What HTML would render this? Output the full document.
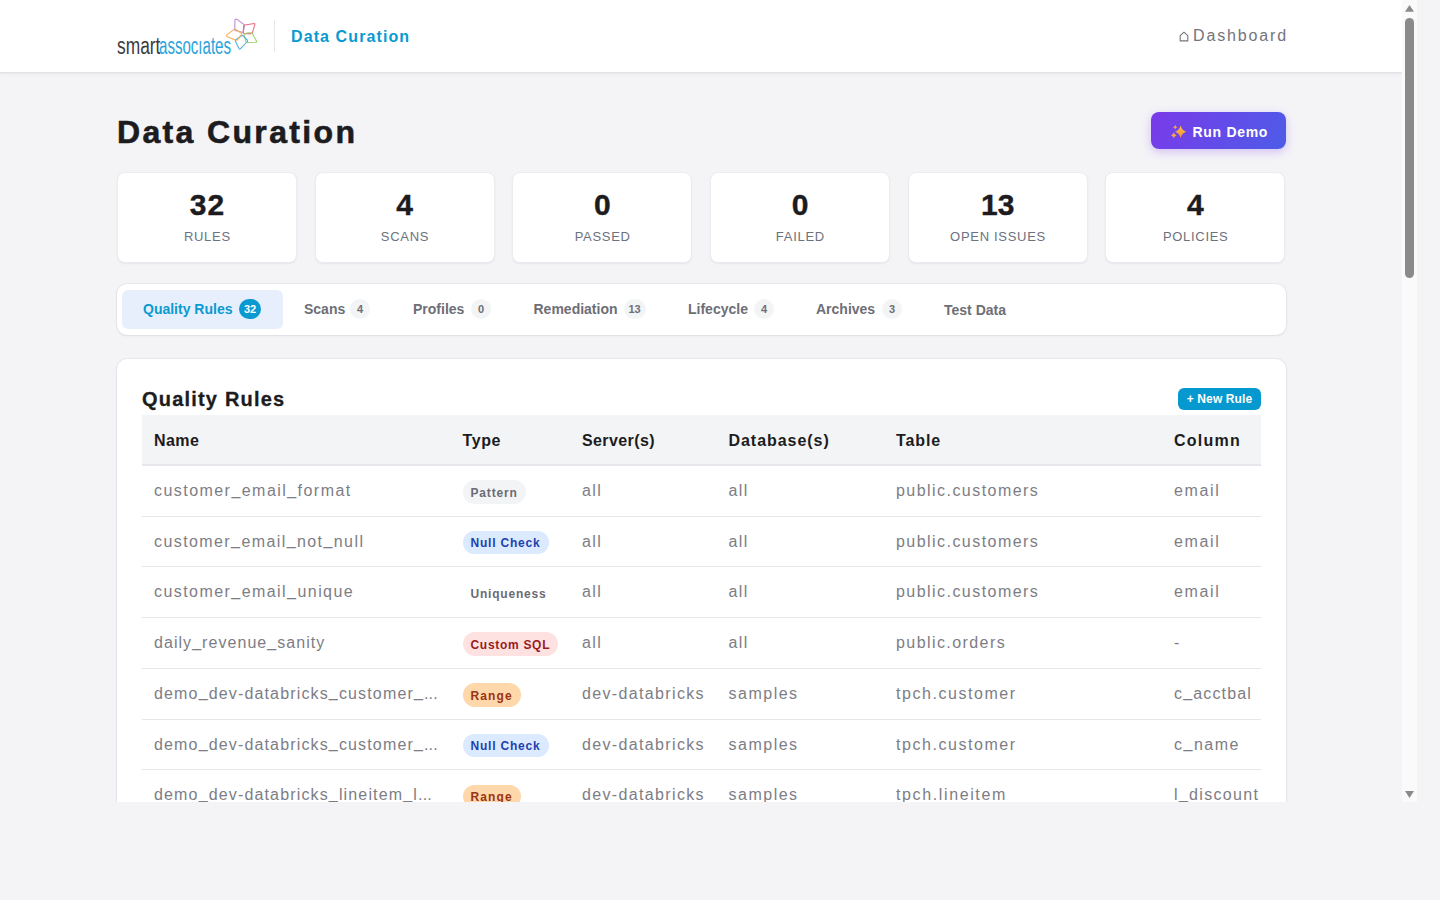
<!DOCTYPE html>
<html><head><meta charset="utf-8">
<style>
*{box-sizing:border-box}
html,body{margin:0;padding:0;width:1440px;height:900px;overflow:hidden;background:#f4f4f7;font-family:"Liberation Sans",sans-serif}
#view{position:absolute;left:0;top:0;width:1402px;height:802px;overflow:hidden;background:#f4f4f7}
#track{position:absolute;left:1402px;top:0;width:15px;height:802px;background:#fafafa}
#thumb{position:absolute;left:3px;top:18px;width:9px;height:260px;border-radius:5px;background:#8a8a8a}
.abs{position:absolute}
header{position:absolute;left:0;top:0;width:1402px;height:72px;background:#fff;box-shadow:0 1px 0 #e3e3e8,0 2px 0 #e9e9ed,0 2px 4px rgba(0,0,0,0.04)}
.logo-text{position:absolute;left:117px;top:33px;font-size:23px;line-height:26px;white-space:nowrap;transform-origin:0 0;letter-spacing:0}
.sep{position:absolute;left:274px;top:20px;width:1px;height:32px;background:#e5e7eb}
.htitle{position:absolute;left:291px;top:27.6px;font-size:16px;line-height:18px;font-weight:bold;color:#0a9ad2;letter-spacing:1.1px;white-space:nowrap}
.dash{position:absolute;left:1193px;top:26.6px;font-size:16px;line-height:18px;color:#74747c;letter-spacing:1.85px;white-space:nowrap}
.ptitle{position:absolute;left:117px;top:113.5px;font-size:32px;line-height:37px;font-weight:bold;color:#1c1c20;letter-spacing:2.35px;white-space:nowrap;-webkit-text-stroke:0.6px #1c1c20}
.run{position:absolute;left:1151px;top:112px;width:135px;height:37px;border-radius:8px;background:linear-gradient(120deg,#7a3ae9 0%,#4d5ce8 100%);box-shadow:0 3px 10px rgba(124,58,237,0.28)}
.run span{position:absolute;left:41.5px;top:12px;font-size:14px;line-height:16px;font-weight:bold;color:#fff;letter-spacing:0.7px;white-space:nowrap}
.card{position:absolute;top:172px;width:180px;height:91px;background:#fff;border-radius:8px;border:1px solid #ececf0;box-shadow:0 1px 2px rgba(20,20,40,0.06)}
.card .v{position:absolute;left:0;right:0;top:15px;text-align:center;font-size:30px;line-height:34px;font-weight:bold;color:#1c1c20;letter-spacing:1px;text-indent:1px;-webkit-text-stroke:0.4px #1c1c20}
.card .l{position:absolute;left:0;right:0;top:56px;text-align:center;font-size:13px;line-height:15px;color:#6b7280;letter-spacing:0.7px;text-indent:0.7px}
.tabs{position:absolute;left:117px;top:284px;width:1169px;height:51px;background:#fff;border-radius:10px;box-shadow:0 0 0 1px rgba(30,30,50,0.045),0 1px 3px rgba(20,20,40,0.06)}
.tab{position:absolute;top:6px;height:39px;border-radius:6px;font-size:14px;font-weight:bold;color:#6e6e76;white-space:nowrap}
.tab.active{background:#e8effc;color:#0a9ad2}
.tab .t{position:absolute;left:21px;top:11px;line-height:16px}
.tab .b{position:absolute;top:9px;height:20px;min-width:20px;padding:0 5px;border-radius:10px;background:#f3f4f6;color:#6e6e76;font-size:11px;line-height:20px;text-align:center}
.tab.active .b{background:#0a9ad2;color:#fff}
.main{position:absolute;left:117px;top:359px;width:1169px;height:600px;background:#fff;border-radius:10px;box-shadow:0 0 0 1px rgba(30,30,50,0.045),0 1px 3px rgba(20,20,40,0.06)}
.qtitle{position:absolute;left:25px;top:29px;font-size:20px;line-height:23px;font-weight:bold;color:#1c1c20;letter-spacing:1.2px;white-space:nowrap;-webkit-text-stroke:0.3px #1c1c20}
.newrule{position:absolute;left:1061px;top:29px;width:83px;height:22px;border-radius:6px;background:#0699d0;color:#fff;font-size:12px;font-weight:bold;line-height:22px;text-align:center;letter-spacing:0.1px}
.tbl{position:absolute;left:25px;top:56px;width:1119px;border-collapse:collapse;table-layout:fixed}
.tbl th{height:50.4px;padding:2px 12px 0;text-align:left;background:#f3f4f6;border-bottom:2px solid #e5e7eb;font-size:16px;font-weight:bold;color:#1c1c20;letter-spacing:0.95px;white-space:nowrap}
.tbl td{height:50.75px;padding:0 12px;border-bottom:1px solid #e5e7eb;font-size:16px;color:#7d7d85;letter-spacing:1.5px;white-space:nowrap;overflow:hidden}
.tbl i{font-style:normal;position:relative;top:-1.5px}
.tbl .nm{overflow:hidden;text-overflow:ellipsis;white-space:nowrap}
.pill{display:inline-block;vertical-align:middle;position:relative;top:1px;height:23.5px;line-height:23.5px;padding:1.5px 8px 0;border-radius:12px;font-size:12px;font-weight:bold;letter-spacing:0.8px}
.pat{background:#f3f4f6;color:#6b6b73}
.nul{background:#dbeafe;color:#1e40af}
.uni{background:#fff;color:#6b6b73}
.sql{background:#fee2e2;color:#991b1b}
.rng{background:#fed7aa;color:#9a3412}
</style></head><body>
<div id="view">
<header>
  <div class="logo-text" style="color:#3b3b3d;transform:scaleX(0.755)">smart</div><div class="logo-text" style="left:158.5px;color:#2aa3dc;transform:scaleX(0.655)">assocıates</div>
  <svg class="abs" style="left:224px;top:16px" width="36" height="38" viewBox="0 0 36 38" fill="none" stroke-width="1.05" stroke-linejoin="round" stroke-linecap="round" opacity="0.9">
    <path d="M11.6 3.3 Q12.3 2.9 13 3.4 L20.6 8.9 Q19.9 13 19.2 16.4 L11.4 14.6 Q10.8 14.3 10.8 13.6 L10.9 4.2 Q11 3.6 11.6 3.3Z" stroke="#b57ccb"/>
    <path d="M19.6 9.8 Q20 9.2 21 9.1 L30.2 7.6 Q31 7.6 30.9 8.4 L28.4 16.6 Q28 17.4 27 17.6 L20.6 17.6 Q19.4 17.5 19.2 16.4 Z" stroke="#e75f72"/>
    <path d="M21.2 17.6 Q24.5 16.2 28 17 L32.6 25.2 Q33 26.1 32 26.2 L22.8 26.4 Q22.2 26.4 22 25.8 L20 18.8 Z" stroke="#96cd62"/>
    <path d="M18.4 19.2 L23.3 24 Q23.9 24.8 23.4 25.5 L16.3 32.9 Q15.6 33.5 15.1 32.7 L11.4 25.2 Q11.1 24.4 11.8 23.8 Z" stroke="#3ba6de"/>
    <path d="M2.6 19.1 L10 13.4 Q10.6 13 11.4 13.3 L17.4 17.2 Q17.9 17.8 17.4 18.5 L13.4 23.9 Q12.9 24.5 12.1 24.2 L2.9 20.4 Q2.1 19.8 2.6 19.1Z" stroke="#f6a64a"/>
  </svg>
  <div class="sep"></div>
  <div class="htitle">Data Curation</div>
  <svg class="abs" style="left:1179px;top:31px" width="10" height="11" viewBox="0 0 10 11"><path d="M1.2 9.9 L1.2 4.6 L5 1.2 L8.8 4.6 L8.8 9.9 Z" fill="none" stroke="#74747c" stroke-width="1.1" stroke-linejoin="round"/></svg>
  <div class="dash">Dashboard</div>
</header>

<div class="ptitle">Data Curation</div>
<div class="run">
  <svg class="abs" style="left:0;top:0" width="135" height="37" viewBox="0 0 135 37"><defs><linearGradient id="sg" x1="0" y1="0" x2="0" y2="1"><stop offset="0" stop-color="#fbbf45"/><stop offset="1" stop-color="#f4913a"/></linearGradient></defs><path d="M29.6 13.600000000000001 Q30.900000000000002 18.5 35.2 19.8 Q30.900000000000002 21.1 29.6 26.0 Q28.3 21.1 24.0 19.8 Q28.3 18.5 29.6 13.600000000000001Z" fill="url(#sg)"/><path d="M24.2 13.0 Q24.7 14.7 26.4 15.2 Q24.7 15.7 24.2 17.4 Q23.7 15.7 22.0 15.2 Q23.7 14.7 24.2 13.0Z" fill="url(#sg)"/><path d="M22.8 20.599999999999998 Q23.400000000000002 22.799999999999997 25.6 23.4 Q23.400000000000002 24.0 22.8 26.2 Q22.2 24.0 20.0 23.4 Q22.2 22.799999999999997 22.8 20.599999999999998Z" fill="url(#sg)"/></svg>
  <span>Run Demo</span>
</div>

<div class="card" style="left:117px"><div class="v">32</div><div class="l">RULES</div></div>
<div class="card" style="left:314.67px"><div class="v">4</div><div class="l">SCANS</div></div>
<div class="card" style="left:512.33px"><div class="v">0</div><div class="l">PASSED</div></div>
<div class="card" style="left:710px"><div class="v">0</div><div class="l">FAILED</div></div>
<div class="card" style="left:907.67px"><div class="v" style="letter-spacing:0;text-indent:0">13</div><div class="l">OPEN ISSUES</div></div>
<div class="card" style="left:1105.33px"><div class="v">4</div><div class="l">POLICIES</div></div>

<div class="tabs">
  <div class="tab active" style="left:5px;width:161px"><span class="t">Quality Rules</span><span class="b" style="left:117px">32</span></div>
  <div class="tab" style="left:166px;width:109px"><span class="t">Scans</span><span class="b" style="left:67px">4</span></div>
  <div class="tab" style="left:275px;width:121px"><span class="t">Profiles</span><span class="b" style="left:79px">0</span></div>
  <div class="tab" style="left:395.5px;width:155px"><span class="t">Remediation</span><span class="b" style="left:111px">13</span></div>
  <div class="tab" style="left:550px;width:128px"><span class="t">Lifecycle</span><span class="b" style="left:87px">4</span></div>
  <div class="tab" style="left:678px;width:128px"><span class="t">Archives</span><span class="b" style="left:87px">3</span></div>
  <div class="tab" style="left:806px;width:104px"><span class="t" style="top:12px">Test Data</span></div>
</div>

<div class="main">
  <div class="qtitle">Quality Rules</div>
  <div class="newrule">+ New Rule</div>
  <table class="tbl">
    <colgroup><col style="width:308.5px"><col style="width:119.5px"><col style="width:146.5px"><col style="width:167.5px"><col style="width:278px"><col style="width:99px"></colgroup>
    <thead><tr><th style="letter-spacing:0.4px">Name</th><th style="letter-spacing:0.6px">Type</th><th style="letter-spacing:0.4px">Server(s)</th><th style="letter-spacing:0.96px">Database(s)</th><th style="letter-spacing:0.9px">Table</th><th style="letter-spacing:1.26px">Column</th></tr></thead>
    <tbody>
      <tr><td style="letter-spacing:1.45px">customer<i>_</i>email<i>_</i>format</td><td><span class="pill pat" style="letter-spacing:0.82px">Pattern</span></td><td style="letter-spacing:1.35px">all</td><td style="letter-spacing:1.35px">all</td><td style="letter-spacing:1.45px">public.customers</td><td style="letter-spacing:1.65px">email</td></tr>
      <tr><td style="letter-spacing:1.41px">customer<i>_</i>email<i>_</i>not<i>_</i>null</td><td><span class="pill nul">Null Check</span></td><td style="letter-spacing:1.35px">all</td><td style="letter-spacing:1.35px">all</td><td style="letter-spacing:1.45px">public.customers</td><td style="letter-spacing:1.65px">email</td></tr>
      <tr><td style="letter-spacing:1.44px">customer<i>_</i>email<i>_</i>unique</td><td><span class="pill uni">Uniqueness</span></td><td style="letter-spacing:1.35px">all</td><td style="letter-spacing:1.35px">all</td><td style="letter-spacing:1.45px">public.customers</td><td style="letter-spacing:1.65px">email</td></tr>
      <tr><td style="letter-spacing:1.05px">daily<i>_</i>revenue<i>_</i>sanity</td><td><span class="pill sql" style="letter-spacing:0.7px">Custom SQL</span></td><td style="letter-spacing:1.35px">all</td><td style="letter-spacing:1.35px">all</td><td style="letter-spacing:1.42px">public.orders</td><td style="letter-spacing:0px">-</td></tr>
      <tr><td style="letter-spacing:1.15px">demo<i>_</i>dev-databricks<i>_</i>customer<i>_</i><span style="letter-spacing:0.2px">...</span></td><td><span class="pill rng" style="letter-spacing:1.1px">Range</span></td><td style="letter-spacing:1.35px">dev-databricks</td><td style="letter-spacing:1.5px">samples</td><td style="letter-spacing:1.55px">tpch.customer</td><td style="letter-spacing:1.16px">c<i>_</i>acctbal</td></tr>
      <tr><td style="letter-spacing:1.15px">demo<i>_</i>dev-databricks<i>_</i>customer<i>_</i><span style="letter-spacing:0.2px">...</span></td><td><span class="pill nul">Null Check</span></td><td style="letter-spacing:1.35px">dev-databricks</td><td style="letter-spacing:1.5px">samples</td><td style="letter-spacing:1.55px">tpch.customer</td><td style="letter-spacing:1.48px">c<i>_</i>name</td></tr>
      <tr><td style="letter-spacing:1.15px">demo<i>_</i>dev-databricks<i>_</i>lineitem<i>_</i>l<span style="letter-spacing:0.2px">...</span></td><td><span class="pill rng" style="letter-spacing:1.1px">Range</span></td><td style="letter-spacing:1.35px">dev-databricks</td><td style="letter-spacing:1.5px">samples</td><td style="letter-spacing:1.62px">tpch.lineitem</td><td style="letter-spacing:1.32px">l<i>_</i>discount</td></tr>
      <tr><td style="letter-spacing:1.15px">demo<i>_</i>dev-databricks<i>_</i>lineitem<i>_</i>l<span style="letter-spacing:0.2px">...</span></td><td><span class="pill nul">Null Check</span></td><td style="letter-spacing:1.35px">dev-databricks</td><td style="letter-spacing:1.5px">samples</td><td style="letter-spacing:1.62px">tpch.lineitem</td><td style="letter-spacing:1.4px">l<i>_</i>quantity</td></tr>
    </tbody>
  </table>
</div>
</div>
<div id="track">
  <svg class="abs" style="left:0;top:0" width="15" height="802"><path d="M3 11.7 L7.5 5 L12 11.7 Z" fill="#8a8a8a"/><path d="M3 791 L12 791 L7.5 798 Z" fill="#8a8a8a"/></svg>
  <div id="thumb"></div>
</div>
</body></html>
